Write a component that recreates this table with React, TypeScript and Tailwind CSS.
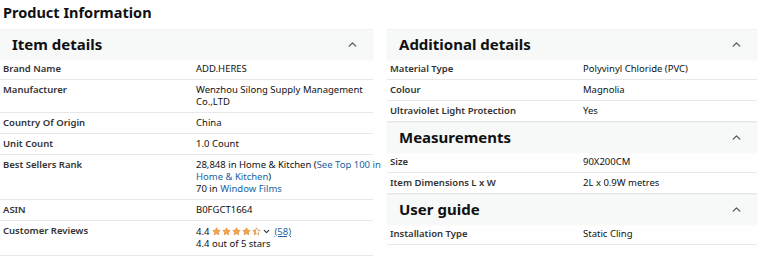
import { ChevronUp, ChevronDown } from 'lucide-react';

type Row = { label: string; value: React.ReactNode };

function Star({ fill }: { fill: number }) {
  const id = `s${Math.round(fill * 100)}`;
  return (
    <svg width="9" height="9" viewBox="0 0 24 24" className="inline-block">
      <defs>
        <linearGradient id={id}>
          <stop offset={`${fill * 100}%`} stopColor="#f3a847" />
          <stop offset={`${fill * 100}%`} stopColor="#fff" />
        </linearGradient>
      </defs>
      <path
        d="M12 2l2.9 6.6 7.1.6-5.4 4.7 1.6 7-6.2-3.7-6.2 3.7 1.6-7L2 9.2l7.1-.6z"
        fill={`url(#${id})`}
        stroke="#de7921"
        strokeWidth="1.5"
      />
    </svg>
  );
}

function Header({ title }: { title: string }) {
  return (
    <div className="flex h-[30px] items-center justify-between border-t border-[#f0f2f2] bg-[#f7f8f8] pl-[12px] pr-[14px] shadow-[0_1px_2px_rgba(0,0,0,0.04)]">
      <h3 className="text-[15px] font-bold text-[#0f1111]">{title}</h3>
      <ChevronUp size={13} strokeWidth={2.5} className="text-[#565959]" />
    </div>
  );
}

function Rows({ rows }: { rows: Row[] }) {
  return (
    <div>
      {rows.map((r) => (
        <div
          key={r.label}
          className="flex border-b border-[#e7e7e7] py-[4px] pl-[3px] text-[9.5px] leading-[12px] text-[#0f1111]"
        >
          <div className="w-[193px] shrink-0 font-semibold text-[#333]">{r.label}</div>
          <div className="min-w-0 flex-1">{r.value}</div>
        </div>
      ))}
    </div>
  );
}

const link = 'text-[#2162a1]';

export default function App() {
  const left: Row[] = [
    { label: 'Brand Name', value: 'ADD.HERES' },
    { label: 'Manufacturer', value: <>Wenzhou Silong Supply Management<br />Co.,LTD</> },
    { label: 'Country Of Origin', value: 'China' },
    { label: 'Unit Count', value: '1.0 Count' },
    {
      label: 'Best Sellers Rank',
      value: (
        <div className="whitespace-nowrap">
          <div>
            28,848 in Home &amp; Kitchen (<span className={link}>See Top 100 in</span>
          </div>
          <div>
            <span className={link}>Home &amp; Kitchen</span>)
          </div>
          <div>
            70 in <span className={link}>Window Films</span>
          </div>
        </div>
      ),
    },
    { label: 'ASIN', value: 'B0FGCT1664' },
    {
      label: 'Customer Reviews',
      value: (
        <div>
          <div className="flex items-center gap-[1px] leading-[13px]">
            <span className="mr-[2px]">4.4</span>
            <Star fill={1} />
            <Star fill={1} />
            <Star fill={1} />
            <Star fill={1} />
            <Star fill={0.45} />
            <ChevronDown size={9} strokeWidth={3} className="text-[#333]" />
            <span className={`${link} ml-[2px] underline`}>(58)</span>
          </div>
          <div className="pb-[1px]">4.4 out of 5 stars</div>
        </div>
      ),
    },
  ];

  return (
    <div className="h-[260px] w-[768px] overflow-hidden bg-white font-['Noto_Sans',sans-serif] text-[#0f1111]">
      <h2 className="px-[3px] pt-[3px] pb-[7px] text-[14.5px] font-bold leading-[19px]">Product Information</h2>
      <div className="flex gap-[14px]">
        <div className="w-[373px]">
          <Header title="Item details" />
          <Rows rows={left} />
        </div>
        <div className="w-[370px]">
          <Header title="Additional details" />
          <Rows
            rows={[
              { label: 'Material Type', value: 'Polyvinyl Chloride (PVC)' },
              { label: 'Colour', value: 'Magnolia' },
              { label: 'Ultraviolet Light Protection', value: 'Yes' },
            ]}
          />
          <Header title="Measurements" />
          <Rows
            rows={[
              { label: 'Size', value: '90X200CM' },
              { label: 'Item Dimensions L x W', value: '2L x 0.9W metres' },
            ]}
          />
          <Header title="User guide" />
          <Rows rows={[{ label: 'Installation Type', value: 'Static Cling' }]} />
        </div>
      </div>
    </div>
  );
}
